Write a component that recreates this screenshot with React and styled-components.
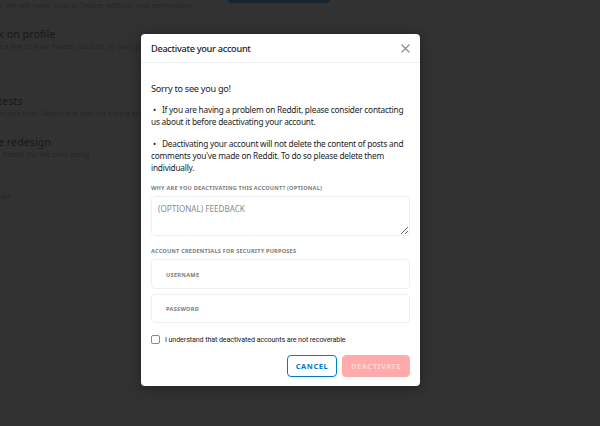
import React from "react";
import styled, { createGlobalStyle } from "styled-components";

const GlobalStyle = createGlobalStyle`
  * { box-sizing: border-box; }
  html, body { margin: 0; padding: 0; }
  body {
    width: 600px;
    height: 426px;
    overflow: hidden;
    background: #ffffff;
    font-family: "Noto Sans", "Liberation Sans", sans-serif;
    color: #1c1c1c;
  }
`;

const Page = styled.div`
  position: relative;
  width: 600px;
  height: 426px;
  overflow: hidden;
  background: #ffffff;
`;

/* settings page behind the dialog, scrolled so its left edge is off screen */
const Settings = styled.div`
  display: flex;
  flex-direction: column;
  margin-left: -2px;
  width: 420px;
`;

const TopRow = styled.div`
  display: flex;
  align-items: flex-start;
  height: 28px;
`;

const TopNote = styled.div`
  font-size: 7.4px;
  line-height: 10px;
  color: #7c7c7c;
  width: 230px;
`;

const ConnectBtn = styled.div`
  width: 102px;
  height: 4px;
  margin-top: -1px;
  border-radius: 0 0 3px 3px;
  background: #0079d3;
`;

const Option = styled.div`
  padding-top: ${(p) => p.$pt || 0}px;
  height: ${(p) => p.$h}px;
  border-bottom: ${(p) => (p.$line ? "1px solid #edeff1" : "none")};
`;

const OptTitle = styled.div`
  font-size: 10.6px;
  font-weight: 500;
  line-height: 13px;
  color: #1c1c1c;
`;

const OptSub = styled.div`
  font-size: 7.4px;
  line-height: 10px;
  color: #7c7c7c;
  white-space: nowrap;
`;

const SectionLabel = styled.div`
  font-family: "Noto Sans", sans-serif;
  font-size: 5.6px;
  font-weight: 700;
  letter-spacing: 0.2px;
  text-transform: uppercase;
  color: #7c7c7c;
`;

const Overlay = styled.div`
  position: absolute;
  inset: 0;
  background: rgba(28, 28, 28, 0.9);
  display: flex;
  align-items: flex-start;
  padding: 34px 0 0 141px;
`;

const Modal = styled.div`
  width: 279px;
  background: #ffffff;
  border-radius: 4px;
  box-shadow: 0 2px 14px rgba(0, 0, 0, 0.35);
  overflow: hidden;
`;

const Header = styled.div`
  height: 29px;
  display: flex;
  align-items: center;
  justify-content: space-between;
  padding: 1px 9px 0 10px;
  border-bottom: 1px solid #edeff1;
`;

const Title = styled.h2`
  margin: 0;
  font-size: 9.2px;
  font-weight: 500;
  letter-spacing: -0.3px;
  color: #1c1c1c;
`;

const CloseBtn = styled.button`
  border: none;
  background: none;
  padding: 0;
  width: 12px;
  height: 12px;
  display: flex;
  align-items: center;
  justify-content: center;
  cursor: pointer;
`;

const Body = styled.div`
  padding: 19px 10px 9px;
  display: flex;
  flex-direction: column;
`;

const Sorry = styled.p`
  margin: 0;
  font-size: 9.2px;
  letter-spacing: -0.3px;
  line-height: 14px;
  color: #1c1c1c;
`;

const Para = styled.p`
  margin: ${(p) => p.$mt}px 0 0;
  font-size: 8.3px;
  letter-spacing: -0.22px;
  line-height: 12px;
  color: #1c1c1c;
`;

const Bullet = styled.span`
  margin: 0 6px 0 2px;
`;

const FieldLabel = styled(SectionLabel)`
  margin-top: ${(p) => p.$mt}px;
  line-height: 8px;
`;

const Feedback = styled.textarea`
  margin-top: 4px;
  height: 40px;
  width: 100%;
  border: 1px solid #edeff1;
  border-radius: 4px;
  padding: 6px 6px;
  font-family: "Noto Sans", sans-serif;
  font-size: 8.1px;
  line-height: 12px;
  color: #1c1c1c;
  resize: vertical;
  outline: none;
  &::placeholder {
    color: #878a8c;
    text-transform: uppercase;
  }
`;

const TextInput = styled.input`
  margin-top: ${(p) => p.$mt}px;
  height: ${(p) => p.$h}px;
  width: 100%;
  border: 1px solid #edeff1;
  border-radius: 4px;
  padding: 0 14px 2px;
  font-family: "Noto Sans", sans-serif;
  font-size: 8px;
  outline: none;
  &::placeholder {
    font-size: 5.6px;
    font-weight: 700;
    letter-spacing: 0.3px;
    color: #7c7c7c;
  }
`;

const CheckRow = styled.label`
  margin-top: 12px;
  display: flex;
  align-items: center;
  gap: 5px;
  font-family: "Roboto", "Noto Sans", sans-serif;
  font-size: 7.2px;
  letter-spacing: -0.12px;
  color: #1c1c1c;
  cursor: pointer;
`;

const Box = styled.span`
  width: 9px;
  height: 9px;
  border: 1px solid #878a8c;
  border-radius: 2px;
  flex: none;
`;

const Footer = styled.div`
  margin-top: 11px;
  display: flex;
  justify-content: flex-end;
  gap: 5px;
`;

const Btn = styled.button`
  height: 22px;
  width: ${(p) => p.$w}px;
  border-radius: 4px;
  font-family: "Noto Sans", sans-serif;
  font-size: 7.4px;
  font-weight: 700;
  letter-spacing: 0.6px;
  text-transform: uppercase;
  padding: 0;
  cursor: pointer;
  border: 1px solid ${(p) => (p.$primary ? "#ffabab" : "#0079d3")};
  background: ${(p) => (p.$primary ? "#ffabab" : "#ffffff")};
  color: ${(p) => (p.$primary ? "#ffd2d2" : "#0079d3")};
`;

export default function App() {
  return (
    <Page>
      <GlobalStyle />
      <Settings>
        <TopRow>
          <TopNote>e. We will never post to Twitter without your permission.</TopNote>
          <ConnectBtn />
        </TopRow>
        <Option $h={50} $line>
          <OptTitle>k on profile</OptTitle>
          <OptSub>e a link to your Twitter account on your profile</OptSub>
        </Option>
        <Option $h={58} $pt={17}>
          <OptTitle>tests</OptTitle>
          <OptSub>atures from Reddit and join the r/beta community</OptSub>
        </Option>
        <Option $h={57}>
          <OptTitle>e redesign</OptTitle>
          <OptSub>t Reddit for the time being</OptSub>
        </Option>
        <SectionLabel>unt</SectionLabel>
      </Settings>

      <Overlay>
        <Modal>
          <Header>
            <Title>Deactivate your account</Title>
            <CloseBtn aria-label="close">
              <svg width="9" height="9" viewBox="0 0 9 9">
                <path d="M0.5 0.5 L8.5 8.5 M8.5 0.5 L0.5 8.5" stroke="#878a8c" strokeWidth="1.1" fill="none" />
              </svg>
            </CloseBtn>
          </Header>
          <Body>
            <Sorry>Sorry to see you go!</Sorry>
            <Para $mt={8}>
              <Bullet>•</Bullet>If you are having a problem on Reddit, please consider contacting us about it before deactivating your account.
            </Para>
            <Para $mt={10}>
              <Bullet>•</Bullet>Deactivating your account will not delete the content of posts and comments you've made on Reddit. To do so please delete them individually.
            </Para>
            <FieldLabel $mt={10}>Why are you deactivating this account? (optional)</FieldLabel>
            <Feedback placeholder="(Optional) Feedback" />
            <FieldLabel $mt={11}>Account credentials for security purposes</FieldLabel>
            <TextInput $mt={4} $h={30} placeholder="USERNAME" />
            <TextInput $mt={5} $h={29} type="password" placeholder="PASSWORD" />
            <CheckRow>
              <Box />
              I understand that deactivated accounts are not recoverable
            </CheckRow>
            <Footer>
              <Btn $w={50}>Cancel</Btn>
              <Btn $w={68} $primary disabled>Deactivate</Btn>
            </Footer>
          </Body>
        </Modal>
      </Overlay>
    </Page>
  );
}
